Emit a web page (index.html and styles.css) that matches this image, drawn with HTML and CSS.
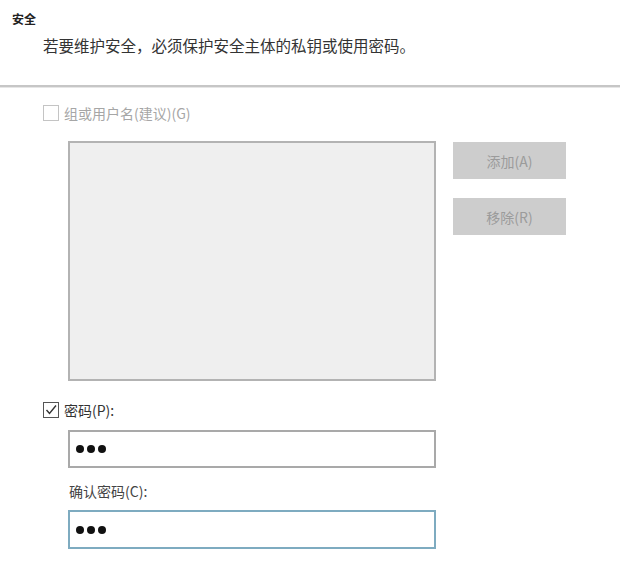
FILE: index.html
```html
<!DOCTYPE html>
<html>
<head>
  <title>安全</title>
  <link rel="stylesheet" href="styles.css">
</head>
<body>
  <div class="header">
    <div class="title">安全</div>
    <div class="desc">若要维护安全，必须保护安全主体的私钥或使用密码。</div>
  </div>
  <div class="divider"></div>

  <div class="panel">
    <div class="check-row disabled">
      <span class="box"></span>
      <span class="label">组或用户名(建议)(G)</span>
    </div>

    <div class="list-row">
      <div class="list"></div>
      <div class="buttons">
        <button class="btn" disabled>添加(A)</button>
        <button class="btn" disabled>移除(R)</button>
      </div>
    </div>

    <div class="check-row checked">
      <span class="box">
        <svg width="14" height="14" viewBox="0 0 14 14"><polyline points="2.5,7 5.5,10.5 12,2.5" fill="none" stroke="#333" stroke-width="1.4"/></svg>
      </span>
      <span class="label">密码(P):</span>
    </div>

    <div class="field">
      <span class="dot"></span><span class="dot"></span><span class="dot"></span>
    </div>

    <div class="field-label">确认密码(C):</div>

    <div class="field focused">
      <span class="dot"></span><span class="dot"></span><span class="dot"></span>
    </div>
  </div>
</body>
</html>
```

FILE: styles.css
```css
body {
  margin: 0;
  background: #fff;
  font-family: "Noto Sans CJK SC", "Noto Sans", sans-serif;
  color: #333;
}

.header {
  padding-top: 12px;
}

.title {
  margin-left: 12px;
  font-size: 12px;
  line-height: 14px;
  font-weight: bold;
  color: #222;
}

.desc {
  margin-top: 9px;
  margin-left: 43px;
  font-size: 15.5px;
  line-height: 20px;
  color: #333;
}

.divider {
  margin-top: 30px;
  height: 2px;
  background: #c6c6c6;
  border-bottom: 1px solid #e6e6e6;
}

.panel {
  padding-left: 43px;
}

.check-row {
  display: flex;
  align-items: center;
  height: 20px;
  font-size: 14px;
}

.check-row .box {
  display: flex;
  align-items: center;
  justify-content: center;
  box-sizing: border-box;
  width: 16px;
  height: 16px;
  border: 1px solid #c4c4c4;
  margin-right: 5px;
  background: #fff;
}

.check-row.disabled {
  margin-top: 15px;
}

.check-row.disabled .label {
  color: #a6a6a6;
}

.check-row.checked {
  margin-top: 19px;
}

.check-row.checked .box {
  border-color: #555;
}

.list-row {
  display: flex;
  margin-top: 18px;
  margin-left: 25px;
}

.list {
  box-sizing: border-box;
  width: 368px;
  height: 240px;
  border: 2px solid #b3b3b3;
  background: #efefef;
}

.buttons {
  display: flex;
  flex-direction: column;
  gap: 19px;
  margin-left: 17px;
  padding-top: 1px;
}

.btn {
  width: 113px;
  height: 37px;
  border: none;
  background: #cdcdcd;
  color: #9b9b9b;
  font-family: inherit;
  font-size: 14px;
}

.field {
  display: flex;
  align-items: center;
  gap: 3px;
  box-sizing: border-box;
  width: 368px;
  height: 38px;
  margin-top: 10px;
  margin-left: 25px;
  padding-left: 6px;
  border: 2px solid #a9a9a9;
  background: #fff;
}

.field.focused {
  height: 39px;
  margin-top: 9px;
  border-color: #7eabc0;
}

.dot {
  width: 8px;
  height: 8px;
  border-radius: 50%;
  background: #111;
}

.field-label {
  margin-top: 13px;
  margin-left: 26px;
  font-size: 14px;
  line-height: 20px;
  color: #444;
}
```
